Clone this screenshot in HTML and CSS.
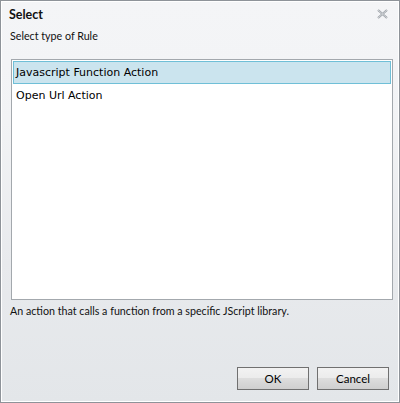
FILE: index.html
```html
<!DOCTYPE html>
<html>
<head>
<meta charset="utf-8">
<link rel="stylesheet" href="styles.css">
</head>
<body>
<div class="dialog">
  <div class="header">
    <div class="title">Select</div>
    <svg class="close" width="11" height="10" viewBox="0 0 11 10">
      <path d="M1 1 L10 9 M10 1 L1 9" stroke="#9a9fa5" stroke-width="2" fill="none"/>
      <path d="M1 1 L10 9 M10 1 L1 9" stroke="#f4f5f7" stroke-width="0.6" fill="none"/>
    </svg>
  </div>
  <div class="subtitle">Select type of Rule</div>
  <div class="listbox">
    <div class="item selected">Javascript Function Action</div>
    <div class="item">Open Url Action</div>
  </div>
  <div class="desc">An action that calls a function from a specific JScript library.</div>
  <div class="footer">
    <button class="btn">OK</button>
    <button class="btn">Cancel</button>
  </div>
</div>
</body>
</html>
```
FILE: styles.css
```css
html, body {
  margin: 0;
  padding: 0;
  background: #8e9399;
  width: 400px;
  height: 403px;
  overflow: hidden;
}
.dialog {
  box-sizing: border-box;
  width: 398px;
  height: 401px;
  margin-left: 1px;
  margin-top: 1px;
  border: 1px solid #fff;
  background: linear-gradient(#f4f5f7 0px, #f2f3f5 120px, #e8eaed 260px, #e3e6e9 401px);
  display: flex;
  flex-direction: column;
  font-family: Lato, "Open Sans", sans-serif;
  font-size: 10.7px;
  color: #111;
}
.header {
  display: flex;
  justify-content: space-between;
  align-items: center;
  padding: 4px 10px 0 7px;
  height: 16px;
}
.title {
  font-weight: bold;
  font-size: 12.5px;
  color: #111;
}
.close { display: block; }
.subtitle {
  margin: 7px 0 0 8px;
  line-height: 14px;
}
.listbox {
  margin: 16px 5px 0 9px;
  height: 241px;
  box-sizing: border-box;
  border: 1px solid #a3a8ad;
  background: #fff;
  padding: 1px;
  font-family: "DejaVu Sans", sans-serif;
  font-size: 11px;
  color: #000;
}
.item {
  height: 21px;
  line-height: 21px;
  padding-left: 2px;
  border: 1px solid transparent;
}
.selected {
  background: #cbe4ee;
  border-color: #6fbfd7;
}
.desc {
  margin: 4px 0 0 8px;
  line-height: 14px;
}
.footer {
  margin-top: auto;
  display: flex;
  justify-content: flex-end;
  gap: 8px;
  padding: 0 9px 11px 0;
}
.btn {
  width: 72px;
  height: 23px;
  border: 1px solid #707070;
  background: linear-gradient(#f2f2f2, #ebebeb 50%, #dddddd 50%, #cfcfcf);
  font-family: Lato, "Open Sans", sans-serif;
  font-size: 11.5px;
  color: #000;
  padding: 0;
}
```
